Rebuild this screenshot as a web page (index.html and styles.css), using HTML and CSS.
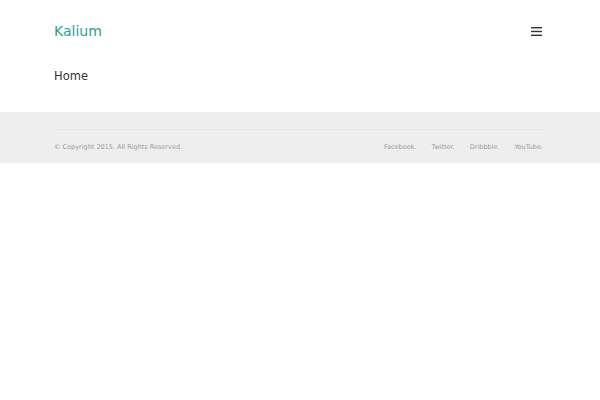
FILE: index.html
```html
<!DOCTYPE html>
<html lang="en">
<head>
<meta charset="utf-8">
<title>Kalium</title>
<link rel="stylesheet" href="styles.css">
</head>
<body>
<header class="site-header">
  <div class="container header-row">
    <a class="logo" href="#">Kalium</a>
    <button class="menu-toggle" aria-label="Menu">
      <svg width="11" height="9" viewBox="0 0 11 9"><rect x="0" y="0" width="11" height="1.4" fill="#333"/><rect x="0" y="3.8" width="11" height="1.4" fill="#333"/><rect x="0" y="7.6" width="11" height="1.4" fill="#333"/></svg>
    </button>
  </div>
</header>
<main class="container page">
  <h1 class="page-title">Home</h1>
</main>
<footer class="site-footer">
  <div class="container footer-inner">
    <p class="copyright">© Copyright 2015. All Rights Reserved.</p>
    <nav class="social">
      <a href="#">Facebook.</a>
      <a href="#">Twitter.</a>
      <a href="#">Dribbble.</a>
      <a href="#">YouTube.</a>
    </nav>
  </div>
</footer>
</body>
</html>
```
FILE: styles.css
```css
html, body {
  margin: 0;
  padding: 0;
  background: #fff;
  font-family: "DejaVu Sans", Verdana, sans-serif;
  color: #333;
}
.container {
  margin: 0 57px 0 54px;
}
.header-row {
  display: flex;
  justify-content: space-between;
  align-items: center;
  padding-top: 21px;
  height: 20px;
}
.logo {
  font-size: 14px;
  line-height: 20px;
  color: #1fa294;
  text-decoration: none;
}
.menu-toggle {
  border: 0;
  background: none;
  padding: 0;
  display: flex;
  margin-right: 1px;
}
.page {
  padding-top: 26px;
  padding-bottom: 27px;
}
.page-title {
  margin: 0;
  font-weight: normal;
  font-size: 11.5px;
  line-height: 18px;
  color: #333;
}
.site-footer {
  background: #eeeeee;
  height: 51px;
}
.footer-inner {
  padding-top: 17px;
  display: flex;
  justify-content: space-between;
  align-items: center;
  position: relative;
}
.footer-inner::before {
  content: "";
  position: absolute;
  left: 0;
  right: 0;
  top: 17px;
  height: 1px;
  background: #e6e6e6;
}
.copyright {
  margin: 13px 0 0;
  font-size: 6.5px;
  line-height: 10px;
  color: #999;
}
.social {
  display: flex;
  gap: 15px;
  margin-top: 13px;
}
.social a {
  font-size: 6.5px;
  line-height: 10px;
  color: #999;
  text-decoration: none;
}
```
